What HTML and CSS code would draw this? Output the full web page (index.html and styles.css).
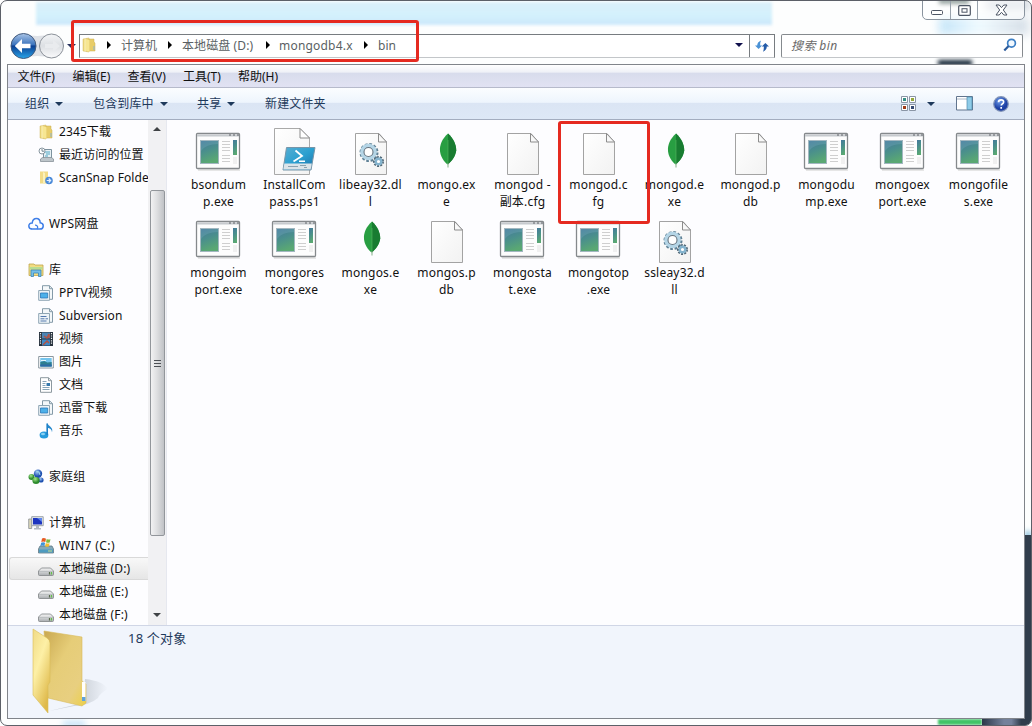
FILE: index.html
```html
<!DOCTYPE html>
<html lang="zh-CN">
<head>
<meta charset="utf-8">
<title>bin</title>
<link rel="stylesheet" href="styles.css">
</head>
<body>
<svg class="defs" width="0" height="0">
  <defs>
    <linearGradient id="gGreen" x1="0" y1="0" x2="0.3" y2="1"><stop offset="0" stop-color="#44789c"/><stop offset=".5" stop-color="#4a8f8c"/><stop offset="1" stop-color="#5aa873"/></linearGradient>
    <linearGradient id="gPaper" x1="0" y1="0" x2="1" y2="1"><stop offset="0" stop-color="#fff"/><stop offset="1" stop-color="#f2f2f2"/></linearGradient>
    <linearGradient id="gPs" x1="0" y1="0" x2="1" y2="1"><stop offset="0" stop-color="#58aed2"/><stop offset=".5" stop-color="#2ba0d0"/><stop offset="1" stop-color="#1d6fa8"/></linearGradient>
    <linearGradient id="gFold" x1="0" y1="0" x2="1" y2="0"><stop offset="0" stop-color="#e9cf6c"/><stop offset=".4" stop-color="#fdf3b4"/><stop offset=".5" stop-color="#d9b950"/><stop offset="1" stop-color="#f1dc82"/></linearGradient>
    <linearGradient id="gBack" x1="0" y1="0" x2="0" y2="1"><stop offset="0" stop-color="#a9c4e6"/><stop offset=".45" stop-color="#3c74bd"/><stop offset=".5" stop-color="#0c3f92"/><stop offset="1" stop-color="#29a6ea"/></linearGradient>
    <linearGradient id="gFwd" x1="0" y1="0" x2="0" y2="1"><stop offset="0" stop-color="#f3f5f7"/><stop offset=".5" stop-color="#dcdfe3"/><stop offset="1" stop-color="#fafbfc"/></linearGradient>
    <linearGradient id="gBigBack" x1="0" y1="0" x2="1" y2="1"><stop offset="0" stop-color="#c9a850"/><stop offset=".4" stop-color="#e6cd78"/><stop offset=".75" stop-color="#e8cf80"/><stop offset="1" stop-color="#ecd048"/></linearGradient>
    <linearGradient id="gBigFront" x1="0" y1="0" x2=".6" y2="1"><stop offset="0" stop-color="#f0da85"/><stop offset=".45" stop-color="#fdf0a6"/><stop offset="1" stop-color="#dfb94a"/></linearGradient>
    <linearGradient id="gShadow" x1="0" y1="0" x2="1" y2="0"><stop offset="0" stop-color="#8c949c"/><stop offset=".6" stop-color="#a9b0b8"/><stop offset="1" stop-color="#f1f5fc"/></linearGradient>
    <linearGradient id="gDrive" x1="0" y1="0" x2="0" y2="1"><stop offset="0" stop-color="#f6f6f6"/><stop offset="1" stop-color="#a9adb0"/></linearGradient>
    <radialGradient id="gHelp" cx=".4" cy=".3"><stop offset="0" stop-color="#6d9cea"/><stop offset="1" stop-color="#1c3fa4"/></radialGradient>
    <radialGradient id="gBallG" cx=".4" cy=".3"><stop offset="0" stop-color="#a5e88a"/><stop offset="1" stop-color="#2d8b2d"/></radialGradient>
    <radialGradient id="gBallB" cx=".4" cy=".3"><stop offset="0" stop-color="#9cc4f4"/><stop offset="1" stop-color="#1e50b0"/></radialGradient>

    <symbol id="exe" viewBox="0 0 48 48">
      <path d="M4 43h42" stroke="#dedede" stroke-width="1.500"/>
      <rect x="2.500" y="6.500" width="43" height="35" rx="1" fill="#fdfdfd" stroke="#85898c" stroke-width="1.300"/>
      <path d="M3 7.500h42v2H3z" fill="#c6cace"/>
      <path d="M35 8h2m2 0h2m2 0h2" stroke="#60656b" stroke-width="1.200"/>
      <rect x="6.500" y="13.500" width="18" height="23" fill="url(#gGreen)" stroke="#a2b7c0"/>
      <path d="M7 24q5-7 17-7v-3H7z" fill="#8cc0d0" fill-opacity=".22"/>
      <path d="M28 14.500h8m-8 3h8m-8 3h8m-8 3h8m-8 5h8m-8 3h8m-8 3h8" stroke="#cfcfcf"/>
      <rect x="39" y="13" width="4" height="15" fill="url(#gGreen)"/>
      <path d="M39 30h4v7h-4z" fill="#f0f0f0"/>
    </symbol>
    <symbol id="paper" viewBox="0 0 48 48">
      <path d="M9.500 6.500h23.500l7.500 8.500v32.500h-31z" fill="url(#gPaper)" stroke="#a3a3a3"/>
      <path d="M32.500 6.500v8.500h8z" fill="#f8f8f8" stroke="#8c8c8c"/>
    </symbol>
    <symbol id="dll" viewBox="0 0 48 48">
      <use href="#paper"/>
      <circle cx="23" cy="25.500" r="7.500" fill="none" stroke="#5f8195" stroke-width="4" stroke-dasharray="2.400 1.530"/>
      <circle cx="22.500" cy="25" r="6.300" fill="#fff" stroke="#b4d5e6" stroke-width="4"/>
      <circle cx="22.500" cy="25" r="4.500" fill="#fff" stroke="#66747f" stroke-width="1.100"/>
      <circle cx="32.500" cy="34.500" r="4" fill="none" stroke="#4f6675" stroke-width="3" stroke-dasharray="1.800 1"/>
      <circle cx="32.500" cy="34.500" r="2.800" fill="#fff" stroke="#85b4ce" stroke-width="2.400"/>
    </symbol>
    <symbol id="ps1" viewBox="0 0 48 48">
      <path d="M4.500 1.500h25.500l9.500 9.500v36.500h-35z" fill="url(#gPaper)" stroke="#a9a9a9"/>
      <path d="M30 1.500v9.500h9.500z" fill="#fff" stroke="#8c8c8c"/>
      <path d="M16.500 20.500h28.500l-4 22.500H13z" fill="url(#gPs)" stroke="#7795a8"/>
      <path d="M14.300 36.500h27.500l-1.100 6H13.400z" fill="#dbe4e9"/>
      <path d="M25.500 23.500l6.500 5.500-8.500 5.500" fill="none" stroke="#fff" stroke-width="1.800"/>
      <path d="M29 34.300h6" stroke="#fff" stroke-width="1.400"/>
      <path d="M18 39.500h10m2-1h6m-2 2h3" stroke="#819aa8" stroke-width=".9"/>
    </symbol>
    <symbol id="leaf" viewBox="0 0 48 48">
      <path d="M26 6.500C20 12 17.500 18 18 24c.5 5.500 3.500 10 7.500 13.500C30 34 33.500 29 34.200 23.500 34.200 17 31 11 26 6.500z" fill="#289e42"/>
      <path d="M26 6.500c5 4.500 8.200 10.500 8.200 17-.7 5.500-4.200 10.500-8.200 14z" fill="#187c31"/>
      <path d="M26 36v4.500" stroke="#82ad85"/>
      <path d="M26 13v23" stroke="#57b563" stroke-width=".6"/>
    </symbol>

    <symbol id="folder" viewBox="0 0 16 16">
      <path d="M2 2l6-1v14l-6-1z" fill="url(#gFold)" stroke="#d2b861" stroke-width=".5"/>
      <path d="M8 2h5v3l1 1v8H8z" fill="#e8cd69" stroke="#cbae50" stroke-width=".5"/>
      <path d="M5 2l3.500 1.200v11.500L5 13.700z" fill="#f7e692"/><path d="M13 9v4" stroke="#8cb3d1"/>
    </symbol>
    <symbol id="recent" viewBox="0 0 16 16">
      <path d="M5.500 2.500h8v9h-8z" fill="#e7f0f4" stroke="#7d929f"/>
      <path d="M7 5h5m-4 2h4M7 9h3" stroke="#51a7c4"/>
      <path d="M2.500 12l2-1.500h9l2 1.500v2.500h-13z" fill="#bdc5ca" stroke="#7d878f" stroke-width=".7"/>
      <circle cx="4" cy="4" r="3" fill="#fff" stroke="#87959f"/><path d="M4 2v2.200h2" fill="none" stroke="#536c7b" stroke-width=".8"/>
    </symbol>
    <symbol id="scan" viewBox="0 0 16 16">
      <path d="M2 1.500h8v12H2z" fill="#f2db86"/><path d="M5 2l2 1v11l-2-1z" fill="#fbf0b9"/>
      <circle cx="11" cy="10.500" r="3.800" fill="#4d8bd9"/><path d="M8.700 10.500h3.500m-1.500-2 2 2-2 2" fill="none" stroke="#e5f0fc" stroke-width="1.100"/>
    </symbol>
    <symbol id="cloud" viewBox="0 0 16 16">
      <path d="M4 13C-.4 12.700-.1 6.700 4.200 7 5 1 12 1.300 12.200 6.800c4.300.5 3.800 6.200-.2 6.200H9" fill="none" stroke="#3f7fe8" stroke-width="1.500"/>
      <path d="M3.500 13h5.300c1.700-1.200.8-4-1.800-3.800" fill="none" stroke="#3f7fe8" stroke-width="1.300"/>
    </symbol>
    <symbol id="library" viewBox="0 0 16 16">
      <path d="M1 3.500V2h5l1 1h8v10.500H1z" fill="#f2dd82" stroke="#bfa54c" stroke-width=".8"/>
      <path d="M1.500 5h13v2.500h-13z" fill="#b8dd92"/>
      <path d="M3 8h10v6.500h-2.500v-3.500h-5v3.500H3z" fill="#75bee7" stroke="#3a87b7" stroke-width=".8"/>
    </symbol>
    <symbol id="libdoc" viewBox="0 0 16 16">
      <path d="M4.500.7h7l3 3v10.600h-10z" fill="#f4f8fa" stroke="#849aa8"/>
      <path d="M11.500.7v3h3" fill="none" stroke="#849aa8"/>
      <path d="M.7 5.500h10.800v9.800H.7z" fill="#edf4f8" stroke="#8fa6b4"/>
    </symbol>
    <symbol id="libblue" viewBox="0 0 16 16"><use href="#libdoc"/><path d="M2.500 8h7.200v5H2.500z" fill="#4cb0e9" stroke="#2a77b8" stroke-width=".8"/></symbol>
    <symbol id="libtext" viewBox="0 0 16 16"><use href="#libdoc"/><path d="M2.500 8.500h6m-6 2.300h4m1 0h2.500m-7.500 2.200h6" stroke="#5479ad"/></symbol>
    <symbol id="film" viewBox="0 0 16 16">
      <path d="M1 1h14v14H1z" fill="#27323e"/><path d="M4 1.500h8v6H4z" fill="#4c84b4"/><path d="M4 8.500h8v6H4z" fill="#3f8bc8"/>
      <path d="M6 5l3 2 2-4v4M5 14l4-4 2 2" fill="none" stroke="#b25243" stroke-width="1.500"/>
      <path d="M2.500 2v12M13.500 2v12" stroke="#eef1f3" stroke-width="1.200" stroke-dasharray="1.200 1.200"/>
    </symbol>
    <symbol id="image" viewBox="0 0 16 16">
      <path d="M.7 2.500h14.600v11.500H.7z" fill="#fff" stroke="#8b979f"/>
      <path d="M2.300 4h11.400v8.500H2.300z" fill="#74c4ed"/><path d="M2.300 8l4-1 3 1.500 4.400-.5v4.500H2.300z" fill="#2d7e8f"/><path d="M2.300 10.500h11.400v2H2.300z" fill="#2c69a5"/>
      <path d="M3 6.500h5" stroke="#e4f6fd"/>
    </symbol>
    <symbol id="doc" viewBox="0 0 16 16">
      <path d="M2.500.7h8l3 3v11.600h-11z" fill="#fff" stroke="#8c989f"/><path d="M10.500.7v3h3" fill="none" stroke="#8c989f"/>
      <path d="M4.500 4.500h4m-4 2h3m-3 2h3m-3 2h7m-7 2h7" stroke="#87a5b8"/><path d="M8.500 6h3.500v3H8.500z" fill="#3679ad"/>
    </symbol>
    <symbol id="music" viewBox="0 0 16 16">
      <ellipse cx="6" cy="12" rx="4.400" ry="3.500" fill="#259bdd"/><path d="M9.200 12V.5" stroke="#1c7fc6" stroke-width="1.600"/><path d="M9.500.3c.7 3.200 6.200 3.700 4.500 9-.2-3-2.300-4-4.500-4.500z" fill="#2588cd"/><ellipse cx="5" cy="11" rx="2" ry="1.200" fill="#89d1f3"/>
    </symbol>
    <symbol id="homegroup" viewBox="0 0 16 16">
      <circle cx="3.500" cy="8" r="3" fill="url(#gBallG)"/><circle cx="10" cy="4.800" r="4.200" fill="url(#gBallB)"/><circle cx="13" cy="11" r="2.600" fill="url(#gBallB)"/><circle cx="8" cy="11.500" r="3.600" fill="url(#gBallG)"/><path d="M8 2l3 1 1 3" fill="none" stroke="#9ad5e8"/>
    </symbol>
    <symbol id="computer" viewBox="0 0 16 16">
      <path d="M.7 4h3v9.500h-3z" fill="#dbd8ba" stroke="#8a8f94" stroke-width=".8"/><path d="M3.700 1.700h11.500v9H3.700z" fill="#e6e8ea" stroke="#9ba2a9"/><path d="M5 3h9v6.500H5z" fill="#1d35bf"/><path d="M9 3h5v4z" fill="#5e86ed"/><path d="M8 11h3v2h2v1.500H6V13h2z" fill="#b3bac2"/>
    </symbol>
    <symbol id="drive" viewBox="0 0 16 16">
      <path d="M3.500 7h9l3 3v3.500q0 1-1 1h-13q-1 0-1-1V10z" fill="url(#gDrive)" stroke="#898c8f" stroke-width=".9"/><path d="M1 10.500h14" stroke="#bcc0c2"/><path d="M11.500 11v2.500" stroke="#57694b" stroke-width="1.200"/><path d="M13.500 11v2.500" stroke="#63c348" stroke-width="1.200"/>
    </symbol>
    <symbol id="windrive" viewBox="0 0 16 16">
      <path d="M2 8h12l1.500 3v4H.5v-4z" fill="#82a9ba" stroke="#617884" stroke-width=".8"/><path d="M1 11.500h14v3H1z" fill="#4e9bc0"/><path d="M11 12v2m2-2v2" stroke="#ccdf86"/>
      <path d="M4 .5q2-1 4 .3L7.300 4q-2-1-4 0z" fill="#e65b24"/><path d="M8.700 1q2 1 3.800.2l-.8 3.300q-2 .8-3.700-.2z" fill="#7fb93e"/><path d="M3.100 4.700q2-1 4 0l-.7 3.200q-2-1-4 0z" fill="#4094d8"/><path d="M7.800 5q2 1 3.800.2l-.8 3.300q-2 .8-3.700-.2z" fill="#f4bd30"/>
    </symbol>
  </defs>
</svg>

<div class="window">
  <div class="glass glass-tab"></div>
  <div class="glass glass-a"></div>
  <div class="glass glass-b"></div>
  <div class="glass glass-c"></div>
  <div class="glass glass-d"></div>
  <div class="glass glass-right"></div>
  <div class="glass glass-green"></div>
  <div class="glass glass-corner"></div>
  <div class="glass glass-blue"></div>

  <div class="caption">
    <span class="cap cap-min"><svg width="14" height="8" viewBox="0 0 14 8"><rect x="1.500" y="2.500" width="11" height="4" rx="1" fill="#fff" stroke="#4c5564"/></svg></span>
    <span class="cap cap-max"><svg width="13" height="11" viewBox="0 0 13 11"><rect x=".7" y=".7" width="11.600" height="9.600" rx="1" fill="#fff" stroke="#4c5564" stroke-width="1.200"/><rect x="4" y="3.700" width="5" height="3.500" fill="#fff" stroke="#4c5564"/></svg></span>
    <span class="cap cap-close"><svg width="13" height="12" viewBox="0 0 13 12"><path d="M1 1h3.200l2.300 2.600L8.800 1H12L8.300 6l3.700 5H8.800L6.500 8.300 4.200 11H1l3.700-5z" fill="#fff" stroke="#4c5564"/></svg></span>
  </div>

  <header class="navbar">
    <svg class="travel" width="68" height="30" viewBox="0 0 68 30">
      <path d="M14 3q13 4 27 0l6 4v16l-6 4q-14-4-27 0z" fill="#dfe2e7"/>
      <circle cx="13.500" cy="15" r="12.500" fill="url(#gBack)" stroke="#41597c"/>
      <path d="M4.800 15l7.200-7v4.800h8.500v4.400H12V22z" fill="#fff"/>
      <circle cx="41.500" cy="15" r="12" fill="url(#gFwd)" stroke="#8b9199"/>
      <path d="M50 15l-7-6v4h-8v4h8v4z" fill="#e9ebee"/>
      <path d="M57 13h9l-4.500 4.500z" fill="#27315d"/>
    </svg>
    <div class="address">
      <div class="crumbs">
        <svg class="i16" viewBox="0 0 16 16"><use href="#folder"/></svg>
        <i class="sep s1"></i><span class="c1">计算机</span>
        <i class="sep s2"></i><span class="c2">本地磁盘 (D:)</span>
        <i class="sep s3"></i><span class="c3">mongodb4.x</span>
        <i class="sep s4"></i><span class="c4">bin</span>
        <i class="down addr-down"></i>
      </div>
      <div class="refresh"><svg width="14" height="14" viewBox="0 0 14 14"><path d="M0 6.500h2.200Q2.200 3 6 1.500 5 3.500 5.200 6.500h2L3.600 10z" fill="#4a92d6"/><path d="M14 7.500h-2.200Q11.800 11 8 12.800q1-2.300.8-5.300h-2L10.400 4z" fill="#245ca9"/></svg></div>
    </div>
    <div class="search"><span>搜索 bin</span><svg width="14" height="14" viewBox="0 0 14 14"><circle cx="8.500" cy="5.200" r="3.900" fill="#f2f9ff" stroke="#3d7fc4" stroke-width="1.700"/><path d="M5.600 8L1.300 12.500" stroke="#2c5c9c" stroke-width="2.200"/></svg></div>
  </header>

  <main class="client">
    <nav class="menubar"><span>文件(F)</span><span>编辑(E)</span><span>查看(V)</span><span>工具(T)</span><span>帮助(H)</span></nav>
    <div class="toolbar">
      <span class="t1">组织<i class="down"></i></span>
      <span class="t2">包含到库中<i class="down"></i></span>
      <span class="t3">共享<i class="down"></i></span>
      <span class="t4">新建文件夹</span>
      <div class="tools">
        <svg width="15" height="15" viewBox="0 0 15 15"><path d="M.5.500h6v6h-6zM8.500.500h6v6h-6zM.5 8.500h6v6h-6zM8.500 8.500h6v6h-6z" fill="#fff" stroke="#8a95a5"/><path d="M2 2h3v3H2z" fill="#368e84"/><path d="M10 2h3v3h-3z" fill="#94a83c"/><path d="M2 10h3v3H2z" fill="#a03c19"/><path d="M10 10h3v3h-3z" fill="#364b73"/></svg>
        <i class="down tdown"></i>
        <svg class="pane-ico" width="17" height="15" viewBox="0 0 17 15"><path d="M.5.500h16v13.500H.5z" fill="#fff" stroke="#61758e"/><path d="M1 3h10" stroke="#aab8c8"/><path d="M11 1h5v12.500h-5z" fill="#8fcce8" stroke="#4e89ac" stroke-width=".7"/></svg>
        <svg width="16" height="16" viewBox="0 0 16 16"><circle cx="8" cy="8" r="7.300" fill="url(#gHelp)" stroke="#8395b8" stroke-width="1.200"/><path d="M5.500 6.300q0-2.500 2.600-2.500t2.500 2.200q0 1.300-1.400 2-.9.500-.9 1.600M8.200 11v1.800" fill="none" stroke="#fff" stroke-width="1.700"/></svg>
      </div>
    </div>

    <div class="content">
      <aside class="tree">
        <div class="row sub"><svg><use href="#folder"/></svg>2345下载</div>
        <div class="row sub"><svg><use href="#recent"/></svg>最近访问的位置</div>
        <div class="row sub"><svg><use href="#scan"/></svg>ScanSnap Folde</div>
        <div class="row"></div>
        <div class="row"><svg><use href="#cloud"/></svg><span class="wide">WPS网盘</span></div>
        <div class="row"></div>
        <div class="row"><svg><use href="#library"/></svg>库</div>
        <div class="row sub"><svg><use href="#libblue"/></svg><span class="wide">PPTV视频</span></div>
        <div class="row sub"><svg><use href="#libtext"/></svg>Subversion</div>
        <div class="row sub"><svg><use href="#film"/></svg>视频</div>
        <div class="row sub"><svg><use href="#image"/></svg>图片</div>
        <div class="row sub"><svg><use href="#doc"/></svg>文档</div>
        <div class="row sub"><svg><use href="#libblue"/></svg>迅雷下载</div>
        <div class="row sub"><svg><use href="#music"/></svg>音乐</div>
        <div class="row"></div>
        <div class="row"><svg><use href="#homegroup"/></svg>家庭组</div>
        <div class="row"></div>
        <div class="row"><svg><use href="#computer"/></svg>计算机</div>
        <div class="row sub"><svg><use href="#windrive"/></svg><span class="wider">WIN7 (C:)</span></div>
        <div class="row sub selected"><svg><use href="#drive"/></svg>本地磁盘 (D:)</div>
        <div class="row sub"><svg><use href="#drive"/></svg>本地磁盘 (E:)</div>
        <div class="row sub"><svg><use href="#drive"/></svg>本地磁盘 (F:)</div>
      </aside>
      <div class="scrollbar"><i class="up"></i><div class="thumb"><i></i><i></i><i></i></div><i class="dn"></i></div>
      <section class="files">
        <div class="file"><svg><use href="#exe"/></svg><p>bsondum<br>p.exe</p></div>
        <div class="file"><svg><use href="#ps1"/></svg><p>InstallCom<br>pass.ps1</p></div>
        <div class="file"><svg><use href="#dll"/></svg><p>libeay32.dl<br>l</p></div>
        <div class="file"><svg><use href="#leaf"/></svg><p>mongo.ex<br>e</p></div>
        <div class="file"><svg><use href="#paper"/></svg><p>mongod -<br>副本.cfg</p></div>
        <div class="file"><svg><use href="#paper"/></svg><p>mongod.c<br>fg</p></div>
        <div class="file"><svg><use href="#leaf"/></svg><p>mongod.e<br>xe</p></div>
        <div class="file"><svg><use href="#paper"/></svg><p>mongod.p<br>db</p></div>
        <div class="file"><svg><use href="#exe"/></svg><p>mongodu<br>mp.exe</p></div>
        <div class="file"><svg><use href="#exe"/></svg><p>mongoex<br>port.exe</p></div>
        <div class="file"><svg><use href="#exe"/></svg><p>mongofile<br>s.exe</p></div>
        <div class="file"><svg><use href="#exe"/></svg><p>mongoim<br>port.exe</p></div>
        <div class="file"><svg><use href="#exe"/></svg><p>mongores<br>tore.exe</p></div>
        <div class="file"><svg><use href="#leaf"/></svg><p>mongos.e<br>xe</p></div>
        <div class="file"><svg><use href="#paper"/></svg><p>mongos.p<br>db</p></div>
        <div class="file"><svg><use href="#exe"/></svg><p>mongosta<br>t.exe</p></div>
        <div class="file"><svg><use href="#exe"/></svg><p>mongotop<br>.exe</p></div>
        <div class="file"><svg><use href="#dll"/></svg><p>ssleay32.d<br>ll</p></div>
      </section>
    </div>

    <footer class="details">
      <svg width="80" height="90" viewBox="0 0 80 90">
        <path d="M17 84l34-8 2-24q18 2 23 10-8 4-10 9-8 7-24 8z" fill="url(#gShadow)" opacity=".45"/>
        <path d="M12 4l38 6v44l4 3v19l-4 3-34-8z" fill="url(#gBigBack)" stroke="#d8bb5a" stroke-width=".6"/>
        <path d="M50 55h3.500v19H50z" fill="#fff"/><path d="M50 70h3.500v4H50z" fill="#61a3dc"/>
        <path d="M1 2l14 9q3 2 3 5v39l-2 3v28L1 68z" fill="url(#gBigFront)" stroke="#d9bc58" stroke-width=".6"/>
      </svg>
      <span>18 个对象</span>
    </footer>
  </main>

  <div class="mark mark-path"></div>
  <div class="mark mark-file"></div>
</div>
</body>
</html>
```
FILE: styles.css
```css
* { box-sizing: border-box; }
body {
  margin: 0;
  width: 1032px;
  height: 726px;
  overflow: hidden;
  background: #fff;
  font-family: "Noto Sans", "Noto Sans CJK SC", sans-serif;
  font-size: 12px;
  line-height: 17px;
  color: #111;
}
svg { display: block; flex: none; }
.defs { position: absolute; }
i { display: block; flex: none; }
p { margin: 0; }

.window {
  position: relative;
  width: 1032px;
  height: 726px;
  overflow: hidden;
  border: 1px solid #5c6068;
  border-radius: 7px;
  background: #fdfefe;
  padding: 0 6px 7px;
}

/* Desktop showing through the frame */
.glass { position: absolute; }
.glass-tab { left: 35px; top: 1px; width: 736px; height: 23px; background: linear-gradient(#daeffa, #d3f1fc 60%, #cbe7fa); filter: blur(1.500px); }
.glass-a { left: 938px; top: -3px; width: 30px; height: 6px; background: #18352f; filter: blur(2px); }
.glass-b { left: 937px; top: 59px; width: 34px; height: 6px; background: #152636; filter: blur(2px); }
.glass-c { left: 938px; top: 16px; width: 90px; height: 18px; background: linear-gradient(90deg, #c2e4f8, #effaff 45%, #d4dde6); filter: blur(5px); }
.glass-d { left: 985px; top: 0; width: 44px; height: 8px; background: #bdc7d3; filter: blur(5px); }
.glass-right { right: 0; top: 534px; width: 6px; height: 190px; background: #303d4c; box-shadow: 0 -4px 5px #8fc3df; }
.glass-green { left: 937px; bottom: 0; width: 44px; height: 6px; background: #41c468; filter: blur(1px); }
.glass-corner { right: 0; bottom: 0; width: 49px; height: 6px; background: linear-gradient(90deg, #2b3749, #74819b 45%, #74819b 60%, #303d4c 80%); }
.glass-blue { left: 62px; bottom: -1px; width: 22px; height: 4px; background: #a9d5f6; filter: blur(3px); }

.caption {
  position: absolute;
  left: 921px;
  top: -1px;
  width: 103px;
  height: 20px;
  display: flex;
  border: 1px solid #8a949f;
  border-radius: 0 0 5px 5px;
  background: rgba(255, 255, 255, .55);
}
.cap { display: flex; align-items: center; justify-content: center; }
.cap-min { width: 28px; padding-top: 3px; border-right: 1px solid #98a2ac; }
.cap-max { width: 27px; border-right: 1px solid #98a2ac; }
.cap-close { flex: 1; }

.navbar {
  position: relative;
  display: flex;
  align-items: flex-start;
  height: 63px;
  padding: 30px 2px 0 3px;
}
.travel { margin-right: 1px; }
.address {
  display: flex;
  width: 696px;
  height: 24px;
  margin: 3px 6px 0 0;
  border: 1px solid #777c80;
  border-bottom-color: #c3c6c9;
  background: #fff;
  color: #5a5f63;
}
.crumbs { display: flex; align-items: center; flex: 1; padding: 0 0 2px 1px; }
.crumbs span { white-space: nowrap; }
.i16 { width: 16px; height: 16px; }
.sep { width: 4px; height: 0; border: 4px solid transparent; border-left: 4px solid #000; border-right: 0; }
.s1 { margin: 0 10px 0 10px; }
.c1 { width: 37px; }
.s2 { margin: 0 10px 0 10px; }
.c2 { width: 74px; letter-spacing: .1px; }
.s3 { margin: 0 9px 0 10px; }
.c3 { width: 76px; letter-spacing: .2px; }
.s4 { margin: 0 10px 0 9px; }
.addr-down { margin: 0 6px 0 auto; }
.refresh { width: 25px; border-left: 1px solid #777c80; display: flex; align-items: center; justify-content: center; }
.search {
  display: flex;
  align-items: center;
  justify-content: space-between;
  width: 242px;
  height: 24px;
  margin-top: 3px;
  padding: 0 5px 2px 9px;
  border: 1px solid #858a8e;
  border-bottom-color: #c3c6c9;
  border-radius: 2px;
  background: rgba(255, 255, 255, .88);
  color: #696969;
  font-style: italic;
  letter-spacing: .4px;
}
.down { width: 8px; height: 4px; border: 4px solid transparent; border-top: 4px solid #1e395b; border-bottom: 0; }
.addr-down { border-top-color: #10104c; }

.client {
  position: relative;
  height: 655px;
  width: 1018px;
  display: flex;
  flex-direction: column;
  border: 1px solid #80848a;
  background: #fdfdff;
}
.menubar {
  display: flex;
  height: 23px;
  padding: 3px 0 0 10px;
  border-bottom: 1px solid #b6bacb;
  background: linear-gradient(#fff, #eff1f7 32%, #d8dcec 38%, #e1e2f3);
}
.menubar span { width: 55px; white-space: nowrap; }
.menubar span:nth-child(-n+3) { margin-left: -.5px; margin-right: .5px; }
.toolbar {
  display: flex;
  align-items: center;
  height: 32px;
  padding: 0 15px 0 17px;
  border-bottom: 1px solid #a3adbf;
  background: linear-gradient(#fbfdff, #eef5fd 46%, #dbe5f4 50%, #dde8f6);
  color: #1e395b;
}
.toolbar > span { display: flex; align-items: center; gap: 6px; white-space: nowrap; letter-spacing: .15px; }
.t1 { width: 68px; }
.t2 { width: 104px; }
.t3 { width: 68px; }
.tools { display: flex; align-items: center; margin-left: auto; }
.tdown { margin: 0 21px 0 11px; }
.pane-ico { margin-right: 20px; }

.content { display: flex; height: 505px; }
.tree { width: 140px; height: 505px; overflow: hidden; flex: none; }
.row {
  display: flex;
  align-items: center;
  gap: 5px;
  height: 23px;
  padding-left: 20px;
  white-space: nowrap;
  letter-spacing: .1px;
}
.row svg { width: 16px; height: 16px; }
.sub { padding-left: 30px; }
.wide { letter-spacing: .1px; }
.wider { letter-spacing: .4px; }
.selected {
  margin-left: 1px;
  padding-left: 28px;
  border: 1px solid #d9d9d9;
  border-width: 1px 0 1px 1px;
  border-radius: 3px 0 0 3px;
  background: linear-gradient(#f8f8f8, #e6e6e6);
}
.scrollbar {
  width: 18px;
  flex: none;
  display: flex;
  flex-direction: column;
  align-items: center;
  padding: 0 1px;
  background: #f1f1f3;
}
.up { margin-top: 7px; border: 4px solid transparent; border-top: 0; border-bottom: 4px solid #3f4245; }
.thumb {
  width: 15px;
  height: 346px;
  margin-top: 59px;
  display: flex;
  flex-direction: column;
  align-items: center;
  justify-content: center;
  gap: 2px;
  border: 1px solid #92969b;
  border-radius: 2px;
  background: linear-gradient(90deg, #f2f2f3, #dedfe1 45%, #c0c2c6);
}
.thumb i { width: 7px; height: 1px; background: #4c5055; }
.dn { margin-top: 77px; border: 4px solid transparent; border-bottom: 0; border-top: 4px solid #3f4245; }
.files {
  flex: 1;
  display: grid;
  grid-template-columns: repeat(11, 76px);
  grid-auto-rows: 88px;
  align-content: start;
  padding: 7px 0 0 13px;
  border-left: 1px solid #e6e8ef;
}
.file { display: flex; flex-direction: column; align-items: center; }
.file svg { width: 48px; height: 48px; }
.file p { margin: 1px -4px 0 0; padding-right: 3px; text-align: center; white-space: nowrap; letter-spacing: .2px; }

.details {
  flex: 1;
  display: flex;
  padding: 1px 0 0 24px;
  border-top: 1px solid #d0d6e6;
  background: #f1f5fc;
  color: #1e395b;
}
.details span { padding: 3px 0 0 16px; font-size: 13px; letter-spacing: .2px; }

/* Highlight frames over the window */
.mark { position: absolute; border: 3px solid #e52a20; border-radius: 3px; }
.mark-path { left: 70px; top: 19px; width: 348px; height: 42px; }
.mark-file { left: 557px; top: 120px; width: 92px; height: 103px; }
```
